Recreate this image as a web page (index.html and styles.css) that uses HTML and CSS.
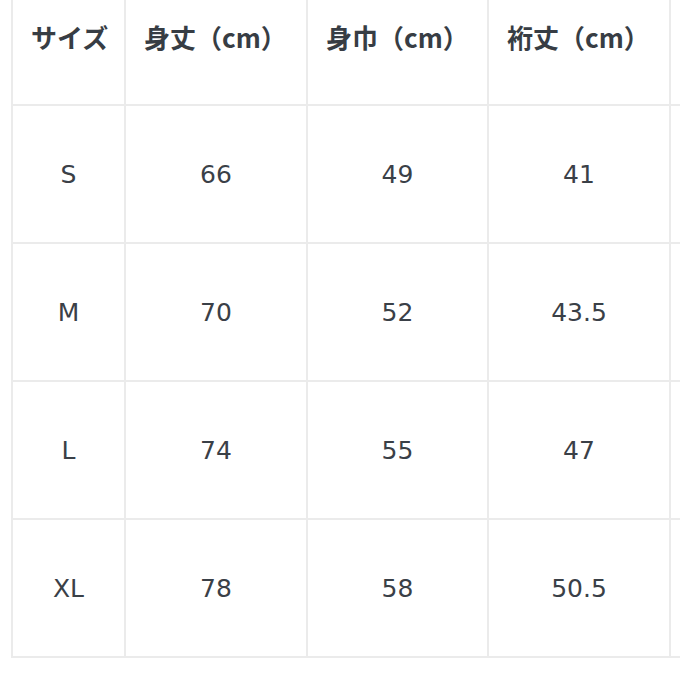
FILE: index.html
```html
<!DOCTYPE html>
<html lang="ja">
<head>
<meta charset="utf-8">
<link rel="stylesheet" href="styles.css">
</head>
<body>
<div class="wrap">
<table class="size-table">
<colgroup>
<col class="c1"><col class="c2"><col class="c3"><col class="c4"><col class="c5">
</colgroup>
<thead>
<tr><th>サイズ</th><th>身丈（cm）</th><th>身巾（cm）</th><th>裄丈（cm）</th><th></th></tr>
</thead>
<tbody>
<tr><td>S</td><td>66</td><td>49</td><td>41</td><td></td></tr>
<tr><td>M</td><td>70</td><td>52</td><td>43.5</td><td></td></tr>
<tr><td>L</td><td>74</td><td>55</td><td>47</td><td></td></tr>
<tr><td>XL</td><td>78</td><td>58</td><td>50.5</td><td></td></tr>
</tbody>
</table>
</div>
</body>
</html>
```
FILE: styles.css
```css
html, body {
  margin: 0;
  padding: 0;
  background: #ffffff;
  overflow: hidden;
}
.wrap {
  padding-left: 11px;
  margin-top: -34px;
  width: 900px;
}
.size-table {
  border-collapse: collapse;
  table-layout: fixed;
  width: 840px;
  font-family: "Noto Sans CJK JP", "Noto Sans", sans-serif;
  font-size: 26px;
  color: #373d44;
}
.c1 { width: 113px; }
.c2 { width: 182px; }
.c3 { width: 181px; }
.c4 { width: 182px; }
.c5 { width: 182px; }
.size-table th,
.size-table td {
  border: 2px solid #ebebeb;
  height: 138px;
  padding: 0 18px;
  box-sizing: border-box;
  vertical-align: middle;
}
.size-table th {
  text-align: left;
  font-weight: 700;
  white-space: nowrap;
}
.size-table td {
  text-align: center;
  font-weight: 400;
  font-family: "DejaVu Sans", "Noto Sans CJK JP", sans-serif;
  font-size: 25px;
  color: #3a4047;
}
```
